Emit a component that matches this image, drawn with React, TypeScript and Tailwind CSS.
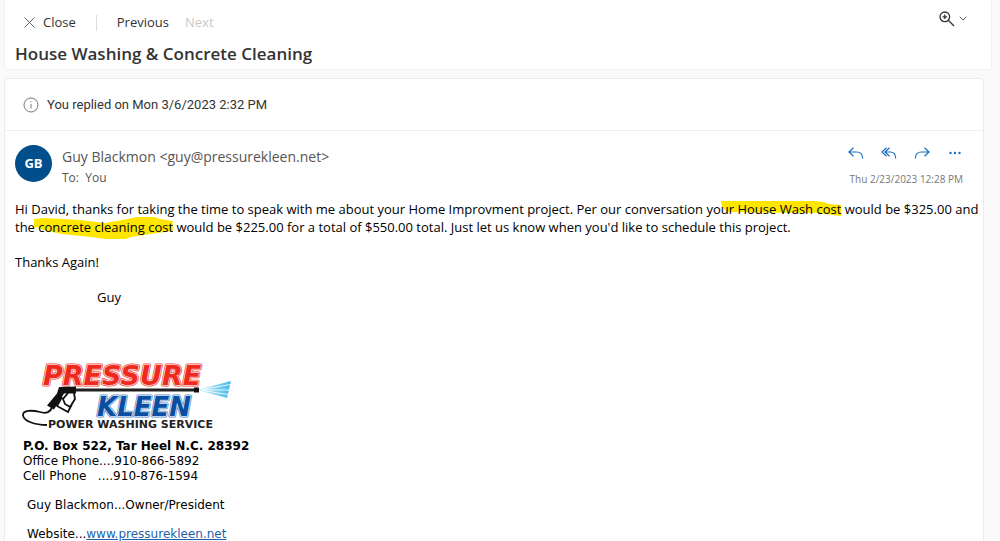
import React from 'react';

const CloseIcon = () => (
  <svg width="11" height="11" viewBox="0 0 11 11" fill="none" stroke="#666" aria-hidden="true">
    <path d="M.5.5l10 10M10.500.5l-10 10" />
  </svg>
);

const InfoIcon = () => (
  <svg width="16" height="16" viewBox="0 0 16 16" fill="none" stroke="#777" aria-hidden="true">
    <circle cx="8" cy="8" r="7" />
    <path d="M8 7v4.500M8 4.300v1.200" />
  </svg>
);

const ZoomIcon = () => (
  <svg width="16" height="16" viewBox="0 0 16 16" fill="none" stroke="#333" strokeWidth="1.300" aria-hidden="true">
    <circle cx="5.800" cy="5.800" r="4.800" />
    <path d="M9.300 9.300l5.700 5.700M5.800 3.500v4.600M3.500 5.800h4.600" />
  </svg>
);

const ChevronIcon = () => (
  <svg width="8" height="5" viewBox="0 0 8 5" fill="none" stroke="#555" aria-hidden="true">
    <path d="M.8.8L4 4 7.200.8" />
  </svg>
);

const ReplyIcon = () => (
  <svg width="16" height="12" viewBox="0 0 16 12" fill="none" stroke="#1a6fc0" strokeWidth="1.200" aria-hidden="true">
    <path d="M5.500.8L1 5l4.500 4.200M1 5h7.500c4 0 6.200 2.300 6.200 6.500" />
  </svg>
);

const ReplyAllIcon = () => (
  <svg width="16" height="12" viewBox="0 0 16 12" fill="none" stroke="#1a6fc0" strokeWidth="1.200" aria-hidden="true">
    <path d="M5.500.8L1 5l4.500 4.200M8.500.8L4 5l4.500 4.200M4 5h5c3.800 0 5.700 2.300 5.700 6.500" />
  </svg>
);

const ForwardIcon = () => (
  <svg width="16" height="12" viewBox="0 0 16 12" fill="none" stroke="#1a6fc0" strokeWidth="1.200" aria-hidden="true">
    <path d="M10.500.8L15 5l-4.500 4.200M15 5H7.500C3.500 5 1.300 7.300 1.300 11.500" />
  </svg>
);

const MoreIcon = () => (
  <svg width="14" height="12" viewBox="0 0 14 12" fill="#1a6fc0" aria-hidden="true">
    <circle cx="2.500" cy="6" r="1.200" />
    <circle cx="7" cy="6" r="1.200" />
    <circle cx="11.500" cy="6" r="1.200" />
  </svg>
);

const actions = [
  { label: 'Reply', icon: <ReplyIcon /> },
  { label: 'Reply all', icon: <ReplyAllIcon /> },
  { label: 'Forward', icon: <ForwardIcon /> },
  { label: 'More actions', icon: <MoreIcon /> },
];

// Marker strokes are drawn behind the words they highlight
const HouseMark = ({ children }: { children: React.ReactNode }) => (
  <span className="relative isolate whitespace-nowrap">
    <svg className="absolute inset-x-0 -top-1 -z-10 h-6 w-full" viewBox="0 0 120 24" preserveAspectRatio="none" fill="#ffe600" aria-hidden="true">
      <path d="M0 5h92l10 1 6 2 12 1v11l-10-1-12-2-92-1-5-5z" />
    </svg>
    {children}
  </span>
);

const ConcreteMark = ({ children }: { children: React.ReactNode }) => (
  <span className="relative isolate whitespace-nowrap">
    <svg className="absolute -top-1 -left-1 -z-10 h-7 w-[calc(100%+4px)]" viewBox="0 0 135 28" preserveAspectRatio="none" fill="#ffe600" aria-hidden="true">
      <path d="M0 5l10-1 35 2 24 3 17-3 14-3 18 0 4 2 13 2v10l-22 3-18 3-6 2H70l-15-2-28-3L8 16l-4-3-4 1z" />
    </svg>
    {children}
  </span>
);

const Logo = () => (
  <svg width="212" height="72" viewBox="0 0 212 72" role="img" aria-label="Pressure Kleen Power Washing Service">
    <defs>
      <linearGradient id="spray" x1="0" x2="1">
        <stop offset="0" stopColor="#d9f4fd" />
        <stop offset="1" stopColor="#43b9e8" />
      </linearGradient>
      <text id="pressure" x="21" y="22">PRESSURE</text>
      <text id="kleen" x="75" y="53">KLEEN</text>
    </defs>
    <g fontFamily="'DejaVu Sans', Verdana, sans-serif" fontWeight="700" fontStyle="italic" fontSize="27" strokeLinejoin="round">
      <use href="#pressure" fill="#ee3124" stroke="#ef4b40" strokeWidth="3" />
      <use href="#pressure" fill="#fff" stroke="#fbd5d1" strokeWidth="1.600" />
      <use href="#pressure" fill="#ee2a1f" />
    </g>
    <path d="M175 27L209 18l-4 17z" fill="url(#spray)" />
    <path d="M180 26.500l28-5M180 27l27 0M180 27.500l26 4" stroke="#fff" strokeWidth=".8" />
    <path d="M54 25.500h119v3H54z" fill="#222" />
    <path d="M172 24.500h5v5h-5z" fill="#111" />
    <g fontFamily="'DejaVu Sans', Verdana, sans-serif" fontWeight="700" fontStyle="italic" fontSize="26" strokeLinejoin="round">
      <use href="#kleen" fill="#0a4ea2" stroke="#5f8fc8" strokeWidth="3" />
      <use href="#kleen" fill="#fff" stroke="#cfdff1" strokeWidth="1.600" />
      <use href="#kleen" fill="#0a4ea2" />
    </g>
    <path d="M37 24l17-.5v7H42l-10 16-7-4 10-12z" fill="#111" />
    <path d="M46 30l-5 6 2 5 5 3 5-8-1-6M40 34l-5 9 11 6 4-8" fill="none" stroke="#111" strokeWidth="1.800" />
    <path d="M30 44c-1 5-6 7-12 5C10 47 1 47 1 52c0 6 12 10 24 10" fill="none" stroke="#111" strokeWidth="1.800" />
    <text x="26" y="65" fill="#222" fontFamily="'DejaVu Sans', Verdana, sans-serif" fontWeight="700" fontSize="11">
      POWER WASHING SERVICE
    </text>
  </svg>
);

const App = () => {
  return (
    <div className="min-h-screen bg-[#fafafa] pl-1 font-['Open_Sans','Noto_Sans',sans-serif] text-[#333]">
      <header className="mr-2 rounded-b border border-t-0 border-[#f0f0f0] bg-white pt-2 pr-6 pb-0.5 pl-2.5">
        <div className="flex h-[29px] items-center text-[13px]">
          <button type="button" className="ml-[9px] flex items-center gap-2">
            <CloseIcon />
            Close
          </button>
          <span className="mx-5 h-4 w-px bg-[#ddd]" />
          <button type="button">Previous</button>
          <button type="button" disabled className="ml-4 text-[#c8c8c8]">Next</button>
          <button type="button" aria-label="Zoom" className="mb-2 ml-auto flex items-center gap-1">
            <ZoomIcon />
            <ChevronIcon />
          </button>
        </div>
        <h1 className="mt-1 text-[17px] leading-[26px] font-semibold">House Washing &amp; Concrete Cleaning</h1>
      </header>

      <main className="mt-2 mr-4 rounded-t border border-b-0 border-[#ececec] bg-white">
        <div className="flex h-[52px] items-center gap-2 border-b border-[#efefef] pl-[18px] font-[Roboto,'Open_Sans',sans-serif] text-[13px]">
          <InfoIcon />
          <span>You replied on Mon 3/6/2023 2:32 PM</span>
        </div>

        <div className="flex items-start pt-3.5 pr-5 pl-2.5">
          <div className="flex size-[37px] items-center justify-center rounded-full bg-[#004e8c] text-[13px] font-bold text-white">GB</div>
          <div className="ml-2.5 text-[#555]">
            <p className="text-sm leading-6">Guy Blackmon &lt;guy@pressurekleen.net&gt;</p>
            <p className="text-[12px] leading-[18px]">To:&nbsp; You</p>
          </div>
          <div className="ml-auto flex flex-col items-end">
            <div className="flex gap-[17px]">
              {actions.map((action) => (
                <button key={action.label} type="button" aria-label={action.label} className="flex h-4 w-4 items-center justify-center">
                  {action.icon}
                </button>
              ))}
            </div>
            <p className="mt-2.5 text-[10px] leading-4 text-[#777]">Thu 2/23/2023 12:28 PM</p>
          </div>
        </div>

        <article className="pt-[13px] pl-2.5 text-black">
          <div className="space-y-[17px] text-[13px] leading-[18px]">
            <p>
              Hi David, thanks for taking the time to speak with me about your Home Improvment project. Per our conversation yo
              <HouseMark>ur House Wash cost</HouseMark> would be $325.00 and the <ConcreteMark>concrete cleaning cost</ConcreteMark>{' '}
              would be $225.00 for a total of $550.00 total. Just let us know when you'd like to schedule this project.
            </p>
            <p>Thanks Again!</p>
            <p className="pl-[82px]">Guy</p>
          </div>

          <div className="mt-[57px] pl-[7px]">
            <Logo />
          </div>

          <address className="mt-1 pl-2 font-['DejaVu_Sans',Verdana,sans-serif] text-[12px] leading-[15px] not-italic">
            <p className="font-bold">P.O. Box 522, Tar Heel N.C. 28392</p>
            <p>Office Phone....910-866-5892</p>
            <p>Cell Phone&nbsp;&nbsp; ....910-876-1594</p>
            <p className="mt-3.5 pl-1">Guy Blackmon...Owner/President</p>
            <p className="mt-3.5 pl-1">
              Website...
              <a href="http://www.pressurekleen.net" className="text-[#1f5fa8] underline">www.pressurekleen.net</a>
            </p>
          </address>
        </article>
      </main>
    </div>
  );
};

export default App;
